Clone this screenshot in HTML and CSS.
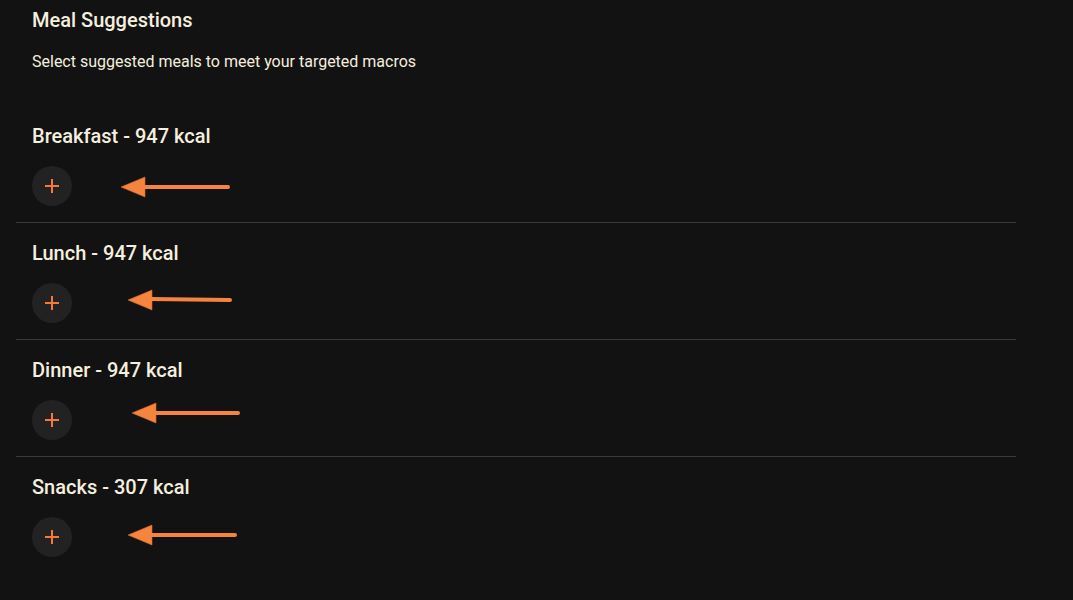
FILE: index.html
```html
<!DOCTYPE html>
<html lang="en">
<head>
<meta charset="utf-8">
<title>Meal Suggestions</title>
<link rel="stylesheet" href="styles.css">
</head>
<body>
<main class="panel">
  <header class="panel-head">
    <h1 class="title">Meal Suggestions</h1>
    <p class="subtitle">Select suggested meals to meet your targeted macros</p>
  </header>

  <section class="meal">
    <h2 class="meal-title">Breakfast - 947 kcal</h2>
    <div class="meal-row">
      <button class="add-btn" aria-label="Add breakfast"><svg viewBox="0 0 14 14" width="14" height="14"><path d="M7 0v14M0 7h14" stroke="currentColor" stroke-width="2"/></svg></button>
      <svg class="arrow arrow-1" viewBox="0 0 112 22" width="112" height="22"><path d="M1 11L25 1V21Z" fill="#f5843f" stroke="#d86a2c" stroke-width="0.6"/><path d="M24 11H108" stroke="#f5843f" stroke-width="4" stroke-linecap="round"/></svg>
    </div>
  </section>

  <section class="meal">
    <h2 class="meal-title">Lunch - 947 kcal</h2>
    <div class="meal-row">
      <button class="add-btn" aria-label="Add lunch"><svg viewBox="0 0 14 14" width="14" height="14"><path d="M7 0v14M0 7h14" stroke="currentColor" stroke-width="2"/></svg></button>
      <svg class="arrow arrow-2" viewBox="0 0 112 22" width="112" height="22"><path d="M1 11L25 1V21Z" fill="#f5843f" stroke="#d86a2c" stroke-width="0.6"/><path d="M24 10L103 11" stroke="#f5843f" stroke-width="4" stroke-linecap="round"/></svg>
    </div>
  </section>

  <section class="meal">
    <h2 class="meal-title">Dinner - 947 kcal</h2>
    <div class="meal-row">
      <button class="add-btn" aria-label="Add dinner"><svg viewBox="0 0 14 14" width="14" height="14"><path d="M7 0v14M0 7h14" stroke="currentColor" stroke-width="2"/></svg></button>
      <svg class="arrow arrow-3" viewBox="0 0 112 22" width="112" height="22"><path d="M1 11L25 1V21Z" fill="#f5843f" stroke="#d86a2c" stroke-width="0.6"/><path d="M24 11H107" stroke="#f5843f" stroke-width="4" stroke-linecap="round"/></svg>
    </div>
  </section>

  <section class="meal">
    <h2 class="meal-title">Snacks - 307 kcal</h2>
    <div class="meal-row">
      <button class="add-btn" aria-label="Add snacks"><svg viewBox="0 0 14 14" width="14" height="14"><path d="M7 0v14M0 7h14" stroke="currentColor" stroke-width="2"/></svg></button>
      <svg class="arrow arrow-4" viewBox="0 0 112 22" width="112" height="22"><path d="M1 11L25 1V21Z" fill="#f5843f" stroke="#d86a2c" stroke-width="0.6"/><path d="M24 11H108" stroke="#f5843f" stroke-width="4" stroke-linecap="round"/></svg>
    </div>
  </section>
</main>
</body>
</html>
```

FILE: styles.css
```css
html, body {
  margin: 0;
  padding: 0;
  background: #121212;
}

body {
  font-family: Roboto, "Liberation Sans", Arial, sans-serif;
  color: #f5efdf;
  min-height: 600px;
}

.panel {
  width: 1000px;
  margin-left: 16px;
}

.panel-head {
  padding: 6px 16px 34px;
}

.title {
  margin: 0;
  font-size: 20px;
  line-height: 28px;
  font-weight: 500;
}

.subtitle {
  margin: 18px 0 0;
  font-size: 16px;
  line-height: 20px;
  font-weight: 400;
}

.meal {
  padding: 16px;
  border-bottom: 1px solid #3a3a3a;
}

.meal:last-child {
  border-bottom: none;
}

.meal-title {
  margin: 0 0 16px;
  font-size: 20px;
  line-height: 28px;
  font-weight: 500;
}

.meal-row {
  position: relative;
  display: flex;
  align-items: center;
  height: 40px;
}

.add-btn {
  width: 40px;
  height: 40px;
  border: none;
  border-radius: 50%;
  background: #222222;
  color: #f47a3a;
  padding: 0;
  display: flex;
  align-items: center;
  justify-content: center;
  cursor: pointer;
}

.add-btn svg {
  display: block;
}

.arrow {
  position: absolute;
  display: block;
}

.arrow-1 { left: 88px; top: 10px; }
.arrow-2 { left: 95px; top: 6px; }
.arrow-3 { left: 99px; top: 2px; }
.arrow-4 { left: 95px; top: 7px; }
```
